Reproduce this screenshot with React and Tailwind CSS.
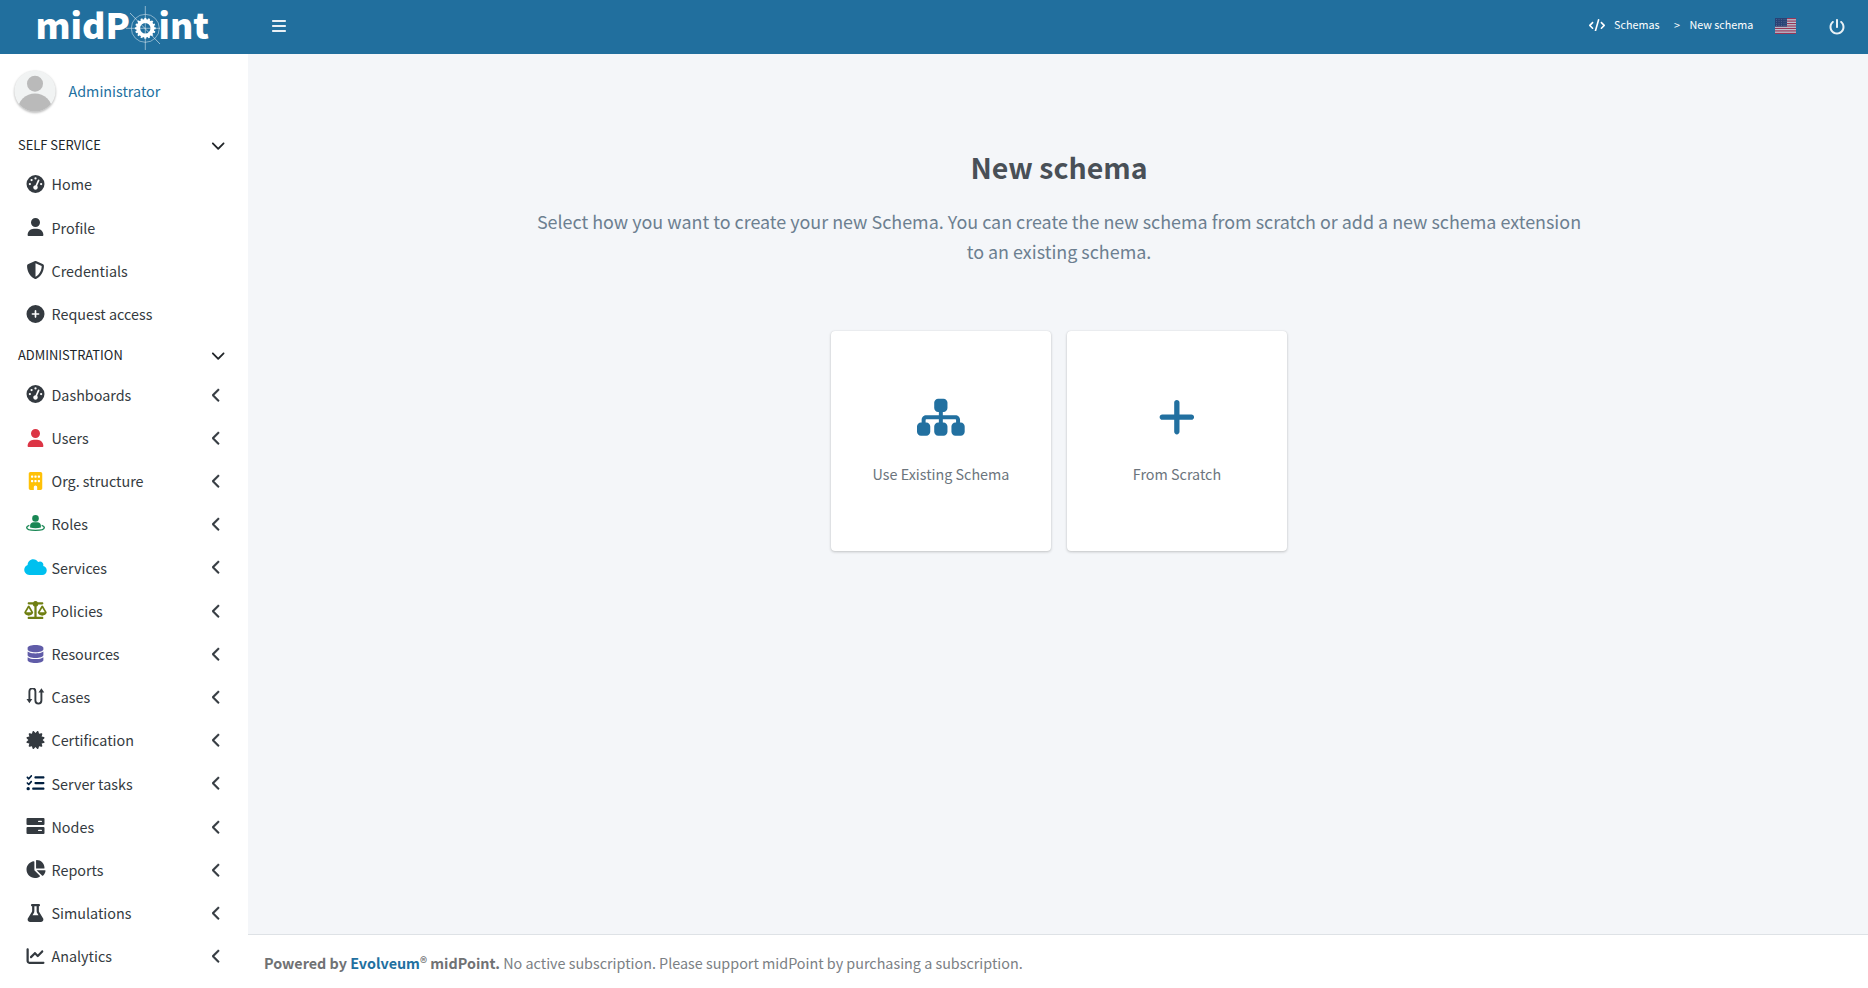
import React from "react";
import {
  FaBars, FaBuilding, FaCertificate, FaChartLine, FaChartPie, FaChevronDown, FaChevronLeft,
  FaCirclePlus, FaCloud, FaCode, FaDatabase, FaFlask, FaGaugeHigh, FaListCheck, FaPlus,
  FaPowerOff, FaScaleBalanced, FaShieldHalved, FaSitemap, FaUser,
} from "react-icons/fa6";

function CaseIcon({ className }) {
  return (
    <svg viewBox="0 1 18 18" className={className} fill="none" stroke="currentColor" strokeWidth="1.9">
      <path d="M2.9 13V4.4a3 3 0 0 1 6 0v9.2a3 3 0 0 0 6 0V5" />
      <path d="M0 12h5.8L2.9 16.2zM12 5.4h5.8L14.9 1.2z" fill="currentColor" stroke="none" />
    </svg>
  );
}

function RoleIcon({ className }) {
  return (
    <svg viewBox="0 0 20 18" className={className} fill="currentColor">
      <circle cx="10" cy="3.4" r="3.3" />
      <path d="M4.6 12.4v-1.6c0-2.2 1.6-3.6 3.4-3.6h4c1.8 0 3.4 1.4 3.4 3.6v1.6c-3.2 1.1-7.6 1.1-10.8 0z" />
      <path
        d="M3.8 10.3C2 11 1.2 11.7 1.2 12.5c0 1.7 3.9 2.9 8.8 2.9s8.8-1.2 8.8-2.9c0-.8-.8-1.5-2.6-2.2"
        fill="none" stroke="currentColor" strokeWidth="1.4"
      />
    </svg>
  );
}

function NodeIcon({ className }) {
  return (
    <svg viewBox="0 0 18 18" className={className}>
      <rect y="0.9" width="18" height="7" rx="1" fill="currentColor" />
      <rect y="9.9" width="18" height="7" rx="1" fill="currentColor" />
      <rect x="11.5" y="3.7" width="4" height="1.4" rx="0.7" fill="white" />
      <rect x="11.5" y="12.7" width="4" height="1.4" rx="0.7" fill="white" />
    </svg>
  );
}

const selfService = [
  { label: "Home", Icon: FaGaugeHigh },
  { label: "Profile", Icon: FaUser },
  { label: "Credentials", Icon: FaShieldHalved },
  { label: "Request access", Icon: FaCirclePlus },
];

const administration = [
  { label: "Dashboards", Icon: FaGaugeHigh },
  { label: "Users", Icon: FaUser, color: "text-[#dc3545]" },
  { label: "Org. structure", Icon: FaBuilding, color: "text-[#ffc107]" },
  { label: "Roles", Icon: RoleIcon, color: "text-[#198754]" },
  { label: "Services", Icon: FaCloud, color: "text-[#00c0ef]" },
  { label: "Policies", Icon: FaScaleBalanced, color: "text-[#6f7f12]" },
  { label: "Resources", Icon: FaDatabase, color: "text-[#605ca8]" },
  { label: "Cases", Icon: CaseIcon },
  { label: "Certification", Icon: FaCertificate },
  { label: "Server tasks", Icon: FaListCheck, color: "text-[#001f3f]" },
  { label: "Nodes", Icon: NodeIcon },
  { label: "Reports", Icon: FaChartPie },
  { label: "Simulations", Icon: FaFlask },
  { label: "Analytics", Icon: FaChartLine },
];

function Logo() {
  const teeth = Array.from({ length: 16 }, (_, i) => i * 22.5);
  return (
    <svg width="248" height="54" viewBox="0 0 248 54" fill="white">
      <g fontFamily="'Noto Sans CJK SC', sans-serif" fontWeight="900" fontSize="34.5">
        <text x="35.5" y="38.5" textLength="94.5" lengthAdjust="spacingAndGlyphs">midP</text>
        <text x="158.5" y="38.5" textLength="50.5" lengthAdjust="spacingAndGlyphs">int</text>
      </g>
      <g stroke="white" fill="none">
        <circle cx="145.3" cy="28.3" r="14" strokeWidth="0.7" opacity="0.65" />
        <circle cx="145.3" cy="28.3" r="7.2" strokeWidth="4" />
        {teeth.map((a) => (
          <path key={a} d="M145.3 20.1V17.9" strokeWidth="2" transform={`rotate(${a} 145.3 28.3)`} />
        ))}
        <path d="M145.3 6v44M126 28.3h34" strokeWidth="0.7" opacity="0.7" />
        <path d="M130 13l30 31" strokeWidth="0.9" opacity="0.6" />
      </g>
    </svg>
  );
}

function Flag() {
  return (
    <svg width="21" height="16" viewBox="0 0 21 16" className="opacity-75">
      <rect width="21" height="16" fill="#f0f0f0" />
      {[0, 2, 4, 6, 8, 10, 12].map((i) => (
        <rect key={i} y={(i * 16) / 13} width="21" height={16 / 13} fill="#c0213f" />
      ))}
      <rect width="12" height="8.6" fill="#2c3468" />
      {[1.5, 3.5, 5.5, 7.2].map((y) =>
        [1.5, 4, 6.5, 9, 11].map((x) => <circle key={`${x}-${y}`} cx={x} cy={y} r="0.35" fill="#c9cde0" />)
      )}
    </svg>
  );
}

function SectionHeader({ children }) {
  return (
    <div className="flex h-[37.7px] items-center justify-between pr-[23px] pb-[1.4px] pl-[18px] text-[12.9px] text-[#212529]">
      <span>{children}</span>
      <FaChevronDown className="size-[14.4px]" />
    </div>
  );
}

function NavItem({ label, Icon, color = "text-[#343a40]", expandable }) {
  return (
    <a className="mb-[3.2px] flex h-10 items-center pr-[27.5px] pl-[24px] text-[#343a40]">
      <span className={`mb-px flex w-[23px] justify-center ${color}`}>
        <Icon className="h-[18px] w-[23px]" />
      </span>
      <span className="ml-[4.5px] grow">{label}</span>
      {expandable && <FaChevronLeft className="h-[14.4px] w-[9px] stroke-current stroke-[16px]" />}
    </a>
  );
}

function Choice({ Icon, label }) {
  return (
    <button className="flex size-[220px] flex-col items-center rounded bg-white pt-[66px] text-[#6c757d] shadow-[0_0_1px_rgba(0,0,0,0.125),0_1px_3px_rgba(0,0,0,0.2)]">
      <span className="flex h-10 items-center pl-[0.6px] text-[#2270a0]">
        <Icon className="h-[42.4px] w-[47.7px]" />
      </span>
      <span className="mt-[25px] leading-6">{label}</span>
    </button>
  );
}

export default function App() {
  return (
    <div className="flex h-[988px] w-full flex-col overflow-hidden bg-[#f4f6f9] font-['Noto_Sans_CJK_SC',sans-serif] text-[14.35px] leading-6">
      <header className="flex h-[54px] shrink-0 items-center bg-[#216f9e] text-white">
        <Logo />
        <FaBars className="mb-[2px] ml-[24px] h-4 w-[14px] opacity-90" />
        <nav className="mb-[4px] ml-auto flex items-center text-[10.75px] leading-4">
          <FaCode className="mr-[9px] h-[12.8px] w-4" />
          <span>Schemas</span>
          <span className="mr-[9.5px] ml-[14.5px]">&gt;</span>
          <span>New schema</span>
        </nav>
        <div className="mb-[2px] ml-[21.5px]"><Flag /></div>
        <FaPowerOff className="mr-[22.7px] ml-[33.5px] size-4 opacity-90" />
      </header>

      <div className="flex min-h-0 grow">
        <aside className="w-[248px] shrink-0 bg-white">
          <div className="flex h-[72.8px] items-center pt-px pl-[14px]">
            <svg width="42" height="44" viewBox="0 0 42 44" className="drop-shadow-[0_1px_1px_rgba(0,0,0,0.3)]">
              <clipPath id="avatar"><circle cx="21" cy="22" r="20.6" /></clipPath>
              <g clipPath="url(#avatar)">
                <rect width="42" height="44" fill="#f1f3f3" />
                <circle cx="21" cy="14.7" r="8" fill="#bababa" />
                <ellipse cx="21" cy="40.5" rx="17" ry="16" fill="#bababa" />
              </g>
            </svg>
            <a className="ml-[12.5px] text-[#2270a0]">Administrator</a>
          </div>
          <SectionHeader>SELF SERVICE</SectionHeader>
          {selfService.map((item) => <NavItem key={item.label} {...item} />)}
          <SectionHeader>ADMINISTRATION</SectionHeader>
          {administration.map((item) => <NavItem key={item.label} {...item} expandable />)}
        </aside>

        <div className="flex min-w-0 grow flex-col">
          <main className="flex grow flex-col items-center pt-[94px] pl-[2px]">
            <h1 className="text-[28.5px] leading-[38px] font-bold text-[#495057]">New schema</h1>
            <p className="mt-5 w-[1060px] text-center text-[17.91px] leading-[30px] text-[#6c7f90]">
              Select how you want to create your new Schema. You can create the new schema from scratch or add a new schema extension to an existing schema.
            </p>
            <div className="mt-[65px] flex gap-4">
              <Choice Icon={FaSitemap} label="Use Existing Schema" />
              <Choice Icon={FaPlus} label="From Scratch" />
            </div>
          </main>
          <footer className="h-[54px] shrink-0 border-t border-[#dee2e6] bg-white pt-4 pl-4 text-[#7b8084]">
            <b className="text-[#707274]">
              Powered by <a className="text-[#2270a0]">Evolveum</a>
              <sup className="top-[-1px] text-[14.4px] leading-none font-medium">®</sup> midPoint.
            </b>{" "}
            No active subscription. Please support midPoint by purchasing a subscription.
          </footer>
        </div>
      </div>
    </div>
  );
}
